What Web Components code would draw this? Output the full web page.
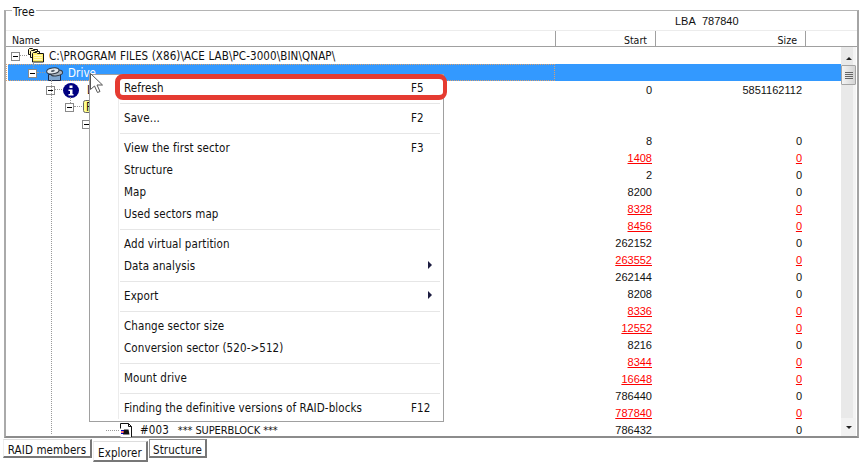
<!DOCTYPE html>
<html><head><meta charset="utf-8"><style>
html,body{margin:0;padding:0;background:#fff;width:863px;height:462px;overflow:hidden}
</style></head><body>
<app-root></app-root>
<script>
const FONT='font-family:"DejaVu Sans Condensed","DejaVu Sans","Noto Sans",sans-serif;font-stretch:condensed;font-size:11.5px;letter-spacing:.1px;';
const NUM='font-family:"Liberation Sans",sans-serif;font-size:11px;letter-spacing:0;';
const icons={
folder:`<svg width="16" height="15" viewBox="0 0 16 15"><path d="M.5 1.500l1-1h3l1 1h4v5h-9z" fill="#fff6b8" stroke="#111"/><path d="M2.500 3.500l1-1h3l1 1h4v6h-9z" fill="#fff6b8" stroke="#111"/><path d="M4.500 5.500l1-1h3l1 1h6v8.500h-11z" fill="#ffee6c" stroke="#111"/><path d="M6 7.500h8M6 9.500h8M6 11.500h8" stroke="#fff8c8"/></svg>`,
drive:`<svg width="17" height="14" viewBox="0 0 17 14"><path d="M2.500 7.500h12v6h-12z" fill="#7fa6cf" stroke="#1c2b4a"/><g transform="rotate(-8 9 5)"><ellipse cx="10.500" cy="6.200" rx="6" ry="2.800" fill="#aab4bf" stroke="#333c48"/><ellipse cx="7" cy="3.600" rx="6.200" ry="2.900" fill="#e6eaee" stroke="#333c48"/><ellipse cx="7" cy="3.600" rx="2" ry="1" fill="#56606c"/></g></svg>`,
info:`<svg width="16" height="15" viewBox="0 0 16 15"><ellipse cx="8" cy="7.500" rx="8" ry="7.500" fill="#000080"/><rect x="6.500" y="2.500" width="3" height="2.500" fill="#fff"/><path d="M5.500 6.500H9.500v4.500h1v1.500H5.500V11h1.500V8H5.500z" fill="#fff"/></svg>`,
sb:`<svg width="13" height="15" viewBox="0 0 13 15"><path d="M.5.5h8l3 3v10.500h-11z" fill="#fff"/><path d="M8.500 .5l3 3V14M.5 .5h8M.5 .5v5M8.500 .5v3h3" fill="none" stroke="#111"/><path d="M1 7.500h4M1 10.500h4" stroke="#0000d0" stroke-width="1.200"/><path d="M4 6.500h4.500l1 5H3z" fill="#111"/><path d="M1 9h3" stroke="#e00"/></svg>`,
f:`<svg width="14" height="13" viewBox="0 0 14 13"><rect x=".5" y=".5" width="13" height="12" rx="2" fill="#ffff8c" stroke="#666"/></svg>`
};
const box=`<svg width="9" height="9" viewBox="0 0 9 9" style="display:block"><rect x=".5" y=".5" width="8" height="8" fill="#fff" stroke="#8a8a8a"/><path d="M2 4.500h5" stroke="#000"/></svg>`;

class TreeNode extends HTMLElement{
  connectedCallback(){
    const r=this.attachShadow({mode:'open'});
    const start=this.getAttribute('start')||'',size=this.getAttribute('size')||'';
    const red=this.hasAttribute('red');
    const sel=this.hasAttribute('sel');
    const last=this.hasAttribute('last');
    const boxAt=this.getAttribute('box');
    const stub=this.getAttribute('stub');
    const iconAt=+this.getAttribute('icon-x')||0;
    const icon=this.getAttribute('icon');
    const textX=+this.getAttribute('text-x')||0;
    const stubFrom=boxAt?+boxAt+9:+stub;
    const h=last?15:17;
    r.innerHTML=`<style>
    :host{display:grid;grid-template-columns:1fr 97px 150px 39px;height:${h}px;line-height:19px;align-items:start;${sel?'background:#3399ff;color:#fff;':''}}
    .n{position:relative;height:${h}px;white-space:nowrap}
    .n>*{position:absolute}
    .v{text-align:right;height:${h}px;${NUM}}
    .red{color:#f00;text-decoration:underline}
    .dots{top:${last?9:8}px;height:0;border-top:1px dotted #999}
    .b{top:5px}
    .focus{left:-2px;top:0;right:0;bottom:0;box-sizing:border-box;border:1px dotted #d8a070}
    </style>
    <div class="n">
      ${sel?'<span class="focus"></span>':''}
      ${stub!==null?`<span class="dots" style="left:${stubFrom}px;width:${iconAt-stubFrom-1}px"></span>`:''}
      ${boxAt?`<span class="b" style="left:${boxAt}px">${box}</span>`:''}
      ${icon?`<span style="left:${iconAt}px;top:${this.getAttribute('icon-y')||1}px;line-height:0">${icons[icon]}</span>`:''}
      <span style="left:${textX}px"><slot></slot></span>
    </div>
    <div class="v">${start?`<span class="${red?'red':''}">${start}</span>`:''}</div>
    <div class="v">${size?`<span class="${red?'red':''}">${size}</span>`:''}</div>
    <div></div>`;
  }
}
customElements.define('tree-node',TreeNode);

class ColHead extends HTMLElement{
  connectedCallback(){
    this.attachShadow({mode:'open'}).innerHTML=`<style>
    :host{display:block;box-sizing:border-box;height:15px;line-height:18px;font-size:10.5px;letter-spacing:0;border-right:1px solid #a0a0a0;padding:0 8px 0 6px;text-align:${this.getAttribute('align')||'left'};width:${this.getAttribute('w')}px;flex:none}
    </style><slot></slot>`;
  }
}
customElements.define('col-head',ColHead);

class VScroll extends HTMLElement{
  connectedCallback(){
    this.attachShadow({mode:'open'}).innerHTML=`<style>
    :host{display:flex;flex-direction:column;width:15px;margin-right:1px;flex:none;background:linear-gradient(90deg,#e9e9e9 0 12px,#f4f4f4 12px 100%);height:389px}
    .btn{height:18px;flex:none;display:flex;align-items:center;justify-content:center}
    .thumb{height:20px;flex:none;box-sizing:border-box;border:1px solid #a4a4a4;border-radius:1px;background:linear-gradient(90deg,#f4f4f4,#d4d4d4);display:flex;flex-direction:column;gap:1px;align-items:center;justify-content:center}
    .thumb i{display:block;width:8px;height:1px;background:#666}
    .sp{flex:1}
    .a{width:0;height:0;border-left:3px solid transparent;border-right:3px solid transparent}
    </style>
    <div class="btn"><div class="a" style="border-bottom:3px solid #222;margin-top:4px"></div></div>
    <div class="thumb"><i></i><i></i><i></i><i></i></div>
    <div class="sp"></div>
    <div class="btn" style="background:#f2f2f2"><div class="a" style="border-top:3px solid #222;"></div></div>`;
  }
}
customElements.define('v-scroll',VScroll);

class CtxMenu extends HTMLElement{
  connectedCallback(){
    this.attachShadow({mode:'open'}).innerHTML=`<style>
    :host{position:absolute;left:89px;top:74px;width:355px;box-sizing:border-box;background:#fff;border:1px solid #a0a0a0;padding:1px 3px 3px 2px;z-index:5;display:block}
    :host::before{content:"";position:absolute;left:28px;top:2px;bottom:2px;width:1px;background:#ececec}
    .ring{position:absolute;left:25px;top:-1px;width:332px;height:26px;box-sizing:border-box;border:solid #e53b31;border-width:5px 4px 5px 5px;border-radius:8px;pointer-events:none}
    </style><slot></slot><div class="ring"></div>`;
  }
}
customElements.define('ctx-menu',CtxMenu);

class MenuItem extends HTMLElement{
  connectedCallback(){
    const k=this.getAttribute('key')||'';
    const sub=this.hasAttribute('sub');
    this.attachShadow({mode:'open'}).innerHTML=`<style>
    :host{display:flex;height:22px;line-height:24px;padding-left:32px;position:relative;white-space:nowrap}
    .k{position:absolute;left:319px}
    .a{position:absolute;left:336px;top:7px;width:0;height:0;border-left:4px solid #1c1c40;border-top:4px solid transparent;border-bottom:4px solid transparent}
    </style><slot></slot>${k?`<span class="k">${k}</span>`:''}${sub?'<span class="a"></span>':''}`;
  }
}
customElements.define('menu-item',MenuItem);

class MenuSep extends HTMLElement{
  connectedCallback(){
    this.attachShadow({mode:'open'}).innerHTML=`<style>:host{display:block;height:8px;position:relative}
    div{position:absolute;left:28px;right:0;top:5px;height:1px;background:#e6e6e6}</style><div></div>`;
  }
}
customElements.define('menu-sep',MenuSep);

class TabBtn extends HTMLElement{
  connectedCallback(){
    const a=this.hasAttribute('active');
    const l=this.hasAttribute('edge');
    this.attachShadow({mode:'open'}).innerHTML=`<style>
    :host{display:block;box-sizing:border-box;flex:none;width:${this.getAttribute('w')}px;height:${a?21:19}px;margin-top:${a?2:0}px;line-height:${a?22:20}px;text-align:center;background:#fff;border-top:1px solid ${l?'#909090':'#ddd'};border-left:1px solid ${l?'#909090':'#eee'};border-right:2px solid #777;border-bottom:2px solid #777;position:relative}
    </style><slot></slot>`;
  }
}
customElements.define('tab-btn',TabBtn);

class DotLines extends HTMLElement{
  connectedCallback(){
    this.attachShadow({mode:'open'}).innerHTML=`<style>
    :host{position:absolute;inset:0;pointer-events:none;display:block}
    i{position:absolute;width:0;border-left:1px dotted #999}
    </style>
    <i style="left:27px;top:15px;height:6px"></i>
    <i style="left:45px;top:33px;height:354px"></i>
    <i style="left:64px;top:50px;height:6px"></i>`;
  }
}
customElements.define('dot-lines',DotLines);

class AppRoot extends HTMLElement{
  connectedCallback(){
    const rows=[[8,0],[1408,0,1],[2,0],[8200,0],[8328,0,1],[8456,0,1],[262152,0],[263552,0,1],[262144,0],[8208,0],[8336,0,1],[12552,0,1],[8216,0],[8344,0,1],[16648,0,1],[786440,0],[787840,0,1]];
    const dataRows=rows.map(([s,z,r])=>`<tree-node start="${s}" size="${z}" ${r?'red':''}></tree-node>`).join('');
    this.attachShadow({mode:'open'}).innerHTML=`<style>
    :host{display:flex;flex-direction:column;width:863px;height:462px;position:relative;${FONT}color:#111;overflow:hidden}
    .group{margin:10px 4px 0 4px;height:428px;flex:none;box-sizing:border-box;border:1px solid #b4b4b4;border-left:2px solid #aaa;border-right:2px solid #a4a4a4;border-bottom:2px solid #8c8c8c;display:flex;flex-direction:column;position:relative}
    .legend{position:absolute;left:6px;top:-8px;background:#fff;padding:0 1px;line-height:18px;z-index:1}
    .lba{height:19px;line-height:20px;padding-left:669px;flex:none;${NUM}}
    .head{display:flex;height:15px;flex:none;border-top:1px solid #ececec;border-bottom:1px solid #a0a0a0}
    .body{flex:1;display:flex;min-height:0;position:relative}
    .rows{flex:1;position:relative;min-width:0;padding-left:2px}
    .tabs{display:flex;margin:1px 0 0 3px;gap:1px;flex:none}
    .sb{margin-left:9px;letter-spacing:-.1px;font-size:11px}
    .cursor{position:absolute;left:89px;top:72px;z-index:6;line-height:0}
    </style>
    <div class="group">
      <span class="legend">Tree</span>
      <div class="lba">LBA&nbsp; 787840</div>
      <div class="head">
        <col-head w="550">Name</col-head>
        <col-head w="100" align="right">Start</col-head>
        <col-head w="150" align="right">Size</col-head>
      </div>
      <div class="body">
        <div class="rows">
          <tree-node stub box="3" icon-x="20" icon="folder" text-x="41">C:\\PROGRAM FILES (X86)\\ACE LAB\\PC-3000\\BIN\\QNAP\\</tree-node>
          <tree-node sel stub box="20" icon-x="38" icon="drive" icon-y="3" text-x="60">Drive</tree-node>
          <tree-node stub box="38" icon-x="55" icon="info" icon-y="2" start="0" size="5851162112" text-x="79">L</tree-node>
          <tree-node stub box="57" icon-x="75" icon="f" icon-y="2" text-x="78">F</tree-node>
          <tree-node box="74"></tree-node>
          ${dataRows}
          <tree-node last stub="98" icon-x="112" icon="sb" icon-y="2" text-x="132" start="786432" size="0">#003<span class="sb">*** SUPERBLOCK ***</span></tree-node>
          <dot-lines></dot-lines>
        </div>
        <v-scroll></v-scroll>
      </div>
    </div>
    <div class="tabs">
      <tab-btn w="89">RAID members</tab-btn>
      <tab-btn w="55" active>Explorer</tab-btn>
      <tab-btn w="58" edge>Structure</tab-btn>
    </div>
    <ctx-menu>
      <menu-item key="F5">Refresh</menu-item><menu-sep></menu-sep>
      <menu-item key="F2">Save...</menu-item><menu-sep></menu-sep>
      <menu-item key="F3">View the first sector</menu-item>
      <menu-item>Structure</menu-item>
      <menu-item>Map</menu-item>
      <menu-item>Used sectors map</menu-item><menu-sep></menu-sep>
      <menu-item>Add virtual partition</menu-item>
      <menu-item sub>Data analysis</menu-item><menu-sep></menu-sep>
      <menu-item sub>Export</menu-item><menu-sep></menu-sep>
      <menu-item>Change sector size</menu-item>
      <menu-item>Conversion sector (520-&gt;512)</menu-item><menu-sep></menu-sep>
      <menu-item>Mount drive</menu-item><menu-sep></menu-sep>
      <menu-item key="F12">Finding the definitive versions of RAID-blocks</menu-item>
    </ctx-menu>
    <svg class="cursor" width="16" height="22" viewBox="0 0 16 22"><path d="M1.500 1.500v16l4-3.500 3 6.500 2.500-1-3-6.500h5.500z" fill="#fff" stroke="#555"/></svg>`;
  }
}
customElements.define('app-root',AppRoot);
</script>
</body></html>
